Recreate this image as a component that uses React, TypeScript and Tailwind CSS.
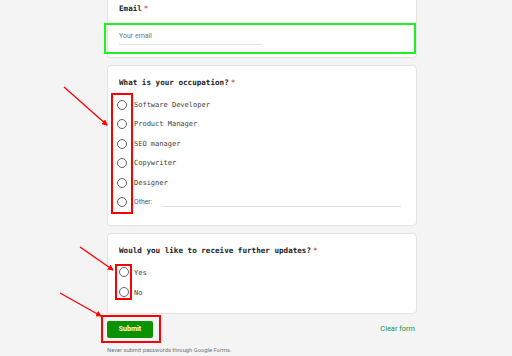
const mono = "font-['DejaVu_Sans_Mono','Liberation_Mono',monospace]";
const sans = "font-['Roboto','Liberation_Sans',sans-serif]";

const occupations = [
  "Software Developer",
  "Product Manager",
  "SEO manager",
  "Copywriter",
  "Designer",
];

const Radio = () => (
  <span className="block w-[10px] h-[10px] rounded-full border border-[#5f6368]" />
);

const Title = ({ text }: { text: string }) => (
  <h3 className={`${mono} text-[7.6px] font-bold text-[#202124] leading-[10px]`}>
    {text}
    <span className="text-[#d93025] ms-[2px] font-normal">*</span>
  </h3>
);

const Arrows = () => (
  <svg
    className="absolute inset-0 pointer-events-none"
    width="512"
    height="356"
    viewBox="0 0 512 356"
  >
    <defs>
      <marker
        id="head"
        markerWidth="6"
        markerHeight="6"
        refX="5"
        refY="3"
        orient="auto"
        markerUnits="userSpaceOnUse"
      >
        <path d="M0,0 L6,3 L0,6 Z" fill="#ff0000" />
      </marker>
    </defs>
    <line x1="64" y1="87" x2="107" y2="125" stroke="#ff0000" strokeWidth="1.3" markerEnd="url(#head)" />
    <line x1="80" y1="247" x2="113" y2="270" stroke="#ff0000" strokeWidth="1.3" markerEnd="url(#head)" />
    <line x1="60" y1="293" x2="101" y2="316" stroke="#ff0000" strokeWidth="1.3" markerEnd="url(#head)" />
  </svg>
);

const App = () => {
  return (
    <div className="relative w-[512px] h-[356px] overflow-hidden bg-[#f4f4f4]">
      <div className="ms-[107px] w-[310px] flex flex-col">
        {/* email card */}
        <div className="bg-white rounded-b-[4px] border border-t-0 border-[#e3e3e3] pt-[4px] pb-[3px]">
          <div className="ps-[11px]">
            <Title text="Email" />
          </div>
          <div className="mt-[9px] -ms-[4px] h-[31px] border-2 border-[#22ee22] ps-[13px] pt-[7px]">
            <div className={`${sans} w-[143px] text-[7px] text-[#70757a] leading-[9px] pb-[3px] border-b border-[#e0e0e0]`}>
              Your email
            </div>
          </div>
        </div>

        {/* occupation card */}
        <div className="mt-[7px] bg-white rounded-[4px] border border-[#e3e3e3] h-[161px] pt-[12px]">
          <div className="ps-[11px]">
            <Title text="What is your occupation?" />
          </div>
          <div className="mt-[5px] flex">
            <div className="ms-[3px] w-[22px] border-2 border-[#ff0000] flex flex-col">
              {[...occupations, "Other"].map((o) => (
                <div key={o} className="h-[19.5px] flex items-center justify-center">
                  <Radio />
                </div>
              ))}
            </div>
            <div className="flex flex-col ps-[1px] pt-[2px] w-[268px]">
              {occupations.map((o) => (
                <div
                  key={o}
                  className={`${mono} h-[19.5px] flex items-center text-[7px] text-[#3c4043]`}
                >
                  {o}
                </div>
              ))}
              <div className="h-[19.5px] flex items-center">
                <span className={`${sans} text-[6.8px] text-[#4a5a78] w-[28px]`}>Other:</span>
                <span className="flex-1 h-[9px] border-b border-[#e0e0e0]" />
              </div>
            </div>
          </div>
        </div>

        {/* updates card */}
        <div className="mt-[7px] bg-white rounded-[4px] border border-[#e3e3e3] h-[81px] pt-[12px]">
          <div className="ps-[11px]">
            <Title text="Would you like to receive further updates?" />
          </div>
          <div className="mt-[8px] flex">
            <div className="ms-[7px] w-[17px] border-2 border-[#ff0000] flex flex-col items-center gap-[10px] py-[1px]">
              <Radio />
              <Radio />
            </div>
            <div className="flex flex-col ps-[2px] pt-[4px] gap-[10px]">
              {["Yes", "No"].map((o) => (
                <div
                  key={o}
                  className={`${mono} h-[10px] flex items-center text-[7px] text-[#3c4043]`}
                >
                  {o}
                </div>
              ))}
            </div>
          </div>
        </div>

        {/* actions */}
        <div className="mt-[1px] flex items-center justify-between">
          <div className="-ms-[6px] flex border-2 border-[#ff0000] pt-[4px] pb-[3px] ps-[4px] pe-[6px]">
            <button
              className={`${sans} w-[46px] h-[17px] rounded-[2px] bg-[#0a9200] text-white text-[7px] font-bold leading-[17px]`}
            >
              Submit
            </button>
          </div>
          <span className={`${sans} text-[7.4px] text-[#1e8e3e] me-[2px]`}>Clear form</span>
        </div>
        <p className={`${sans} mt-[3px] text-[5.8px] leading-[8px] text-[#70757a]`}>
          Never submit passwords through Google Forms.
        </p>
      </div>
      <Arrows />
    </div>
  );
};

export default App;
